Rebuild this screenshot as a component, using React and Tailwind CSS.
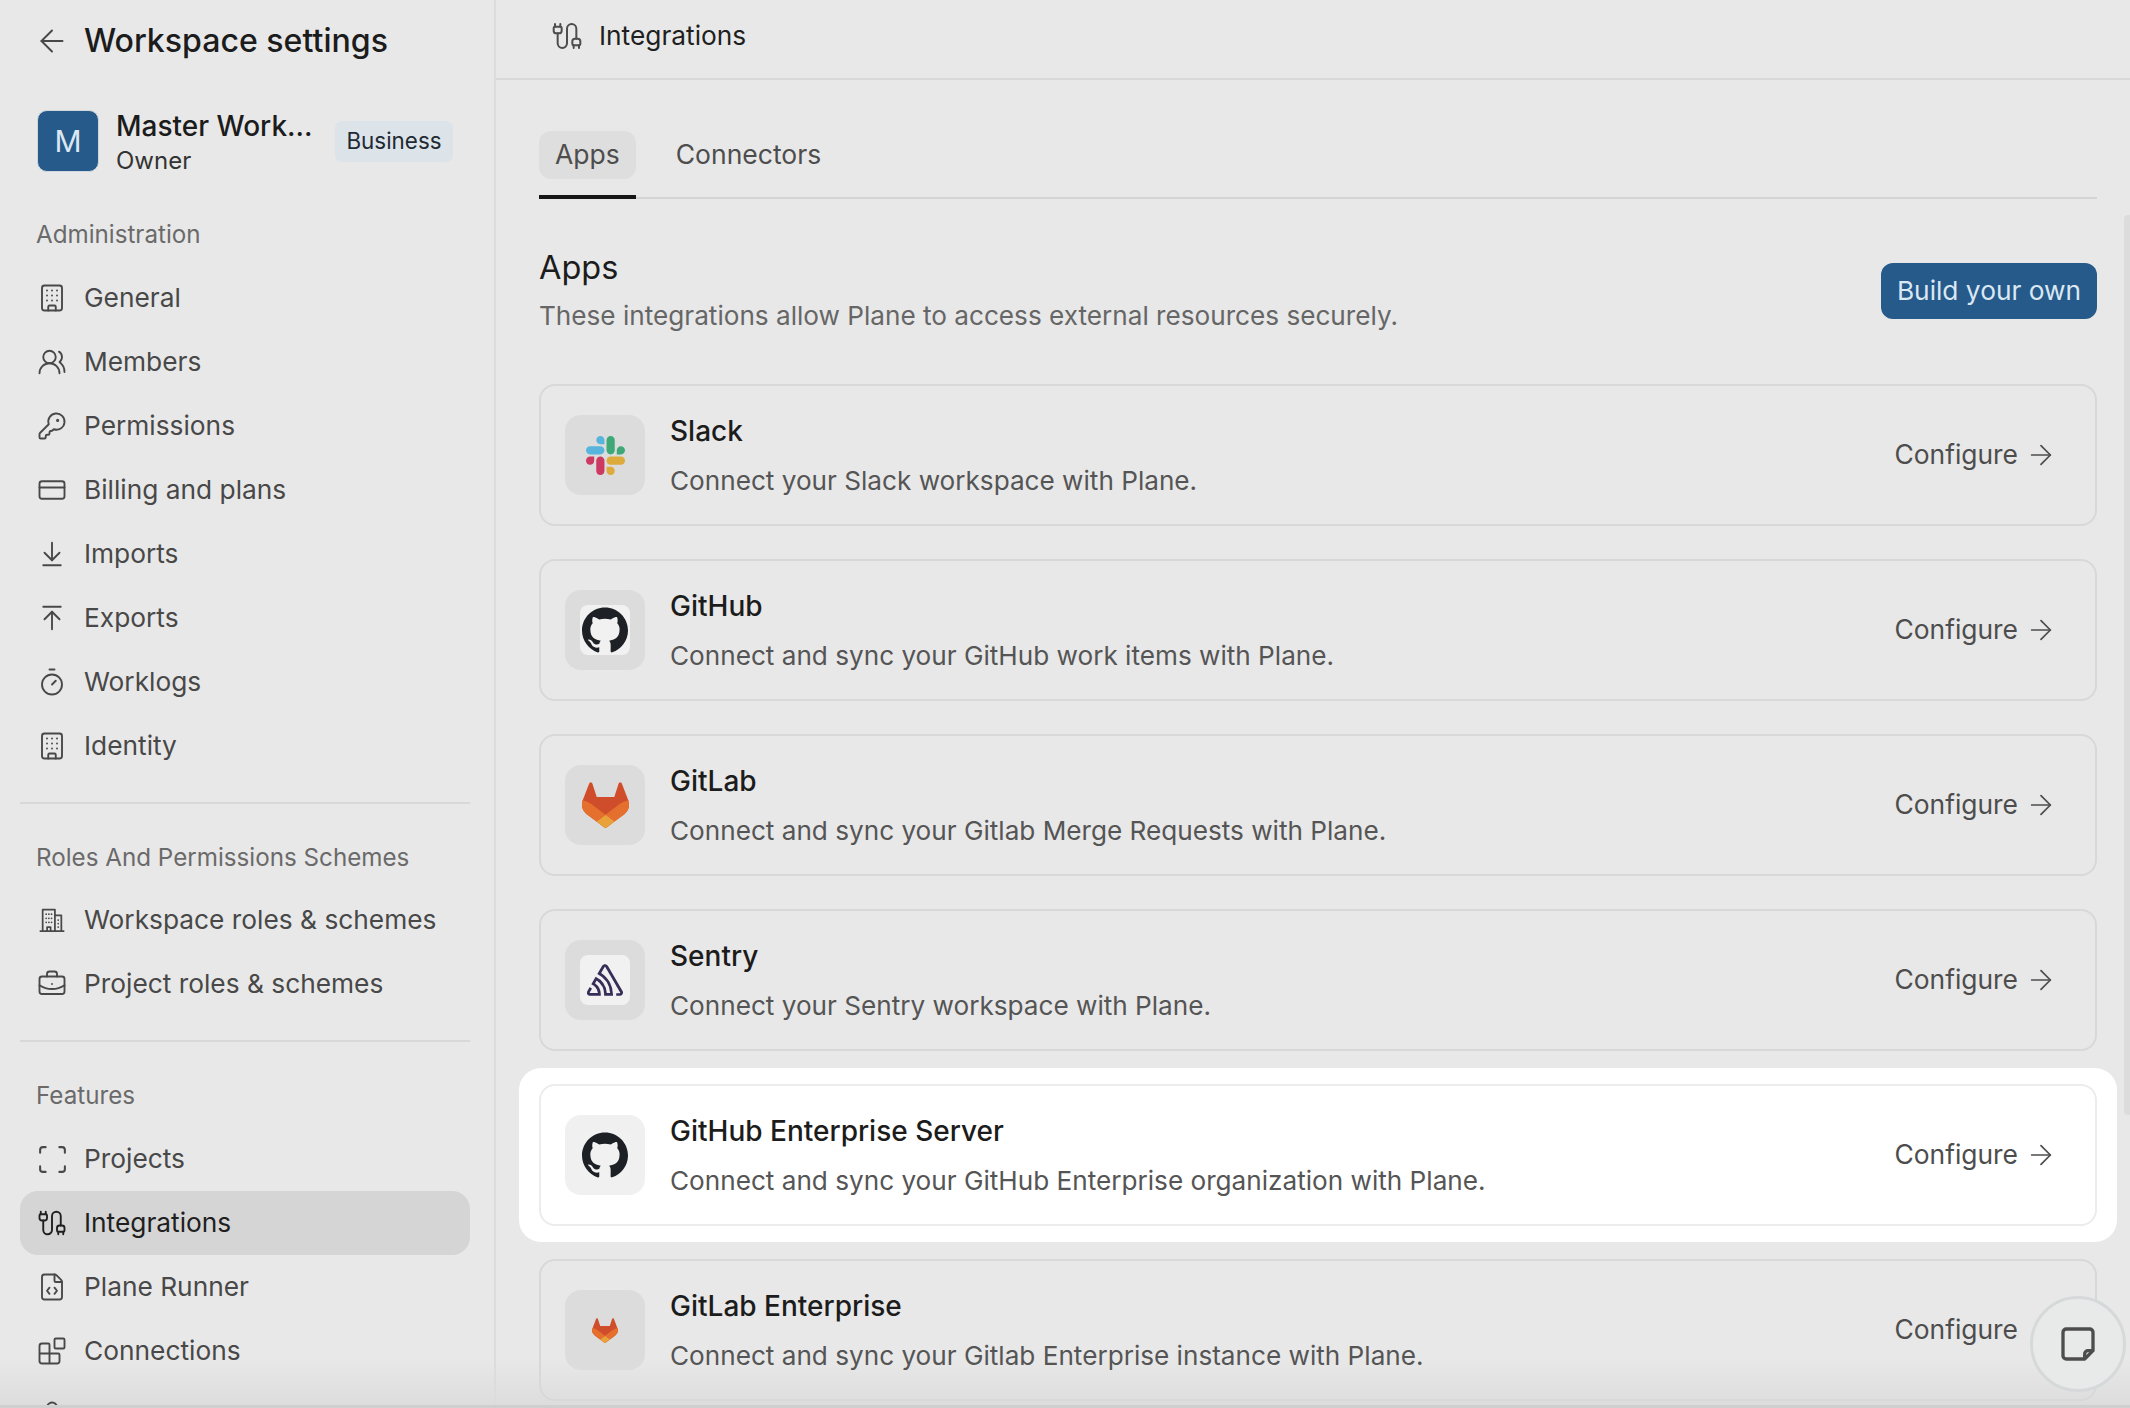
import {
  ArrowLeft, ArrowRight, Building, UsersRound, KeyRound, CreditCard, ArrowDownToLine, ArrowUpToLine,
  Timer, BriefcaseBusiness, Scan, Cable, FileCode, Blocks, Webhook,
} from 'lucide-react';
import { SiGithub, SiSentry } from 'react-icons/si';

function SchemeBuilding({ size, strokeWidth }) {
  return (
    <svg width={size} height={size} viewBox="0 0 24 24" fill="none" stroke="currentColor" strokeWidth={strokeWidth} strokeLinecap="round" strokeLinejoin="round">
      <path d="M2 21.5h20" />
      <path d="M4 21.5V3h10.5v18.5" />
      <path d="M14.5 8H20v13.5" />
      <path d="M7.8 21.5v-3.5h3v3.5" />
      <path d="M7 7h.01M9.3 7h.01M11.6 7h.01M7 10.5h.01M9.3 10.5h.01M11.6 10.5h.01M7 14h.01M9.3 14h.01M11.6 14h.01M17.3 12h.01M17.3 15h.01M17.3 18h.01" />
    </svg>
  );
}

const adminItems = [
  { label: 'General', icon: Building },
  { label: 'Members', icon: UsersRound },
  { label: 'Permissions', icon: KeyRound },
  { label: 'Billing and plans', icon: CreditCard },
  { label: 'Imports', icon: ArrowDownToLine },
  { label: 'Exports', icon: ArrowUpToLine },
  { label: 'Worklogs', icon: Timer },
  { label: 'Identity', icon: Building },
];

const roleItems = [
  { label: 'Workspace roles & schemes', icon: SchemeBuilding, size: 28 },
  { label: 'Project roles & schemes', icon: BriefcaseBusiness },
];

const featureItems = [
  { label: 'Projects', icon: Scan, size: 33 },
  { label: 'Integrations', icon: Cable, active: true },
  { label: 'Plane Runner', icon: FileCode },
  { label: 'Connections', icon: Blocks },
];

function SlackLogo() {
  return (
    <svg viewBox="0 0 122.8 122.8" className="w-[39px] h-[39px]">
      <g fill="#cc3a62">
        <path d="M25.8 77.6c0 7.1-5.8 12.9-12.9 12.9S0 84.7 0 77.6s5.8-12.9 12.9-12.9h12.9v12.9z" />
        <path d="M32.3 77.6c0-7.1 5.8-12.9 12.9-12.9s12.9 5.8 12.9 12.9v32.3c0 7.1-5.8 12.9-12.9 12.9s-12.9-5.8-12.9-12.9V77.6z" />
      </g>
      <g fill="#57b4dc">
        <path d="M45.2 25.8c-7.1 0-12.9-5.8-12.9-12.9S38.1 0 45.2 0s12.9 5.8 12.9 12.9v12.9H45.2z" />
        <path d="M45.2 32.3c7.1 0 12.9 5.8 12.9 12.9s-5.8 12.9-12.9 12.9H12.9C5.8 58.1 0 52.3 0 45.2s5.8-12.9 12.9-12.9h32.3z" />
      </g>
      <g fill="#3fa877">
        <path d="M97 45.2c0-7.1 5.8-12.9 12.9-12.9s12.9 5.8 12.9 12.9-5.8 12.9-12.9 12.9H97V45.2z" />
        <path d="M90.5 45.2c0 7.1-5.8 12.9-12.9 12.9s-12.9-5.8-12.9-12.9V12.9C64.7 5.8 70.5 0 77.6 0s12.9 5.8 12.9 12.9v32.3z" />
      </g>
      <g fill="#dcab3c">
        <path d="M77.6 97c7.1 0 12.9 5.8 12.9 12.9s-5.8 12.9-12.9 12.9-12.9-5.8-12.9-12.9V97h12.9z" />
        <path d="M77.6 90.5c-7.1 0-12.9-5.8-12.9-12.9s5.8-12.9 12.9-12.9h32.3c7.1 0 12.9 5.8 12.9 12.9s-5.8 12.9-12.9 12.9H77.6z" />
      </g>
    </svg>
  );
}

function GitlabLogo({ className }) {
  return (
    <svg viewBox="95 96 190 187" className={className}>
      <path fill="#cf4d2a" d="M282.83,170.73l-.27-.69-26.14-68.22a6.81,6.81,0,0,0-2.69-3.24,7,7,0,0,0-8,.43,7,7,0,0,0-2.32,3.52l-17.65,54H154.29l-17.65-54A6.86,6.86,0,0,0,134.32,99a7,7,0,0,0-8-.43,6.87,6.87,0,0,0-2.69,3.24L97.44,170l-.26.69a48.54,48.54,0,0,0,16.1,56.1l.09.07.24.17,39.82,29.82,19.7,14.91,12,9.06a8.07,8.07,0,0,0,9.76,0l12-9.06,19.7-14.91,40.06-30,.1-.08A48.56,48.56,0,0,0,282.83,170.73Z" />
      <path fill="#e5702e" d="M282.83,170.73l-.27-.69a88.3,88.3,0,0,0-35.15,15.8L190,229.25c19.55,14.79,36.57,27.64,36.57,27.64l40.06-30,.1-.08A48.56,48.56,0,0,0,282.83,170.73Z" />
      <path fill="#e9a13a" d="M153.43,256.89l19.7,14.91,12,9.06a8.07,8.07,0,0,0,9.76,0l12-9.06,19.7-14.91S209.55,244,190,229.25C170.45,244,153.43,256.89,153.43,256.89Z" />
      <path fill="#e5702e" d="M132.58,185.84A88.19,88.19,0,0,0,97.44,170l-.26.69a48.54,48.54,0,0,0,16.1,56.1l.09.07.24.17,39.82,29.82s17-12.85,36.57-27.64Z" />
    </svg>
  );
}

function GithubLogo() {
  return (
    <div className="w-[50px] h-[50px] rounded-lg bg-[#f1f1f1] flex items-center justify-center">
      <SiGithub className="w-[46px] h-[46px] text-[#1d2126]" />
    </div>
  );
}

function SentryLogo() {
  return (
    <div className="w-[50px] h-[50px] rounded-lg bg-[#f1f1f1] flex items-center justify-center">
      <SiSentry className="w-[36px] h-[36px] text-[#362d59]" />
    </div>
  );
}

function NavRow({ item }) {
  const Icon = item.icon;
  return (
    <div
      className={`h-[64px] px-[17px] flex items-center gap-[17px] rounded-[18px] text-[26.3px] ${
        item.active ? 'bg-[#d5d5d5] text-[#1f1f1f]' : 'text-[#484848]'
      }`}
    >
      <div className="w-[30px] shrink-0 flex justify-center">
        <Icon size={item.size || 30} strokeWidth={1.5} className="shrink-0" />
      </div>
      <span>{item.label}</span>
    </div>
  );
}

function NavLabel({ children, className }) {
  return <div className={`h-[40px] pl-[16px] flex items-center text-[24.2px] text-[#6a6a6a] ${className}`}>{children}</div>;
}

function AppCard({ name, description, logo, highlighted, hideArrow }) {
  return (
    <div className={`h-[142px] rounded-[16px] border-2 pl-[24px] pr-[38px] flex items-center ${highlighted ? 'border-[#ececec]' : 'border-[#d8d8d8]'}`}>
      <div className={`w-[80px] h-[80px] rounded-[16px] flex items-center justify-center shrink-0 ${highlighted ? 'bg-[#f0f0f0]' : 'bg-[#dcdcdc]'}`}>
        {logo}
      </div>
      <div className="ml-[25px] mt-[2px] flex-1">
        <div className="h-[40px] flex items-center text-[28px] [font-weight:450] text-[#1c1c1c]">{name}</div>
        <div className="mt-[10px] h-[40px] flex items-center text-[26.15px] text-[#555555]">{description}</div>
      </div>
      <div className="flex items-center gap-[7px] text-[26.4px] text-[#4d4d4d]">
        <span>Configure</span>
        <ArrowRight size={32} strokeWidth={1.3} className={hideArrow ? 'invisible' : ''} />
      </div>
    </div>
  );
}

export default function App() {
  return (
    <div className="relative w-[2130px] h-[1408px] overflow-hidden flex bg-[#e8e8e8] [font-family:Inter,sans-serif]">
      {/* Bottom fade sits behind the panels, which have no background */}
      <div className="absolute inset-x-0 bottom-0 h-[50px] bg-gradient-to-b from-transparent to-[#dcdcdc]" />

      {/* Sidebar */}
      <aside className="relative w-[496px] h-full shrink-0 border-r-2 border-[#dcdcdc] pl-[20px] pr-[24px] overflow-hidden">
        <div className="mt-[15px] h-[52px] px-[17px] flex items-center gap-[17px]">
          <div className="w-[30px] shrink-0 flex justify-center">
            <ArrowLeft size={36} strokeWidth={1.3} className="shrink-0 text-[#484848]" />
          </div>
          <span className="text-[32.1px] font-medium text-[#1c1c1c]">Workspace settings</span>
        </div>

        <div className="mt-[43px] h-[62px] pl-[17px] flex items-center">
          <div className="w-[62px] h-[62px] rounded-[10px] bg-[#255a8a] border border-[#d0d8de] flex items-center justify-center text-[30px] text-[#dbe8f3] shrink-0">
            M
          </div>
          <div className="ml-[17px] mt-[2px] w-[219px]">
            <div className="text-[28px] leading-[38px] font-medium text-[#1c1c1c]">Master Work...</div>
            <div className="text-[24px] leading-[32px] text-[#333333]">Owner</div>
          </div>
          <div className="w-[118px] h-[41px] rounded-[7px] bg-[#dce4ea] flex items-center justify-center text-[22.4px] text-[#1f2a33]">
            Business
          </div>
        </div>

        <NavLabel className="mt-[43px]">Administration</NavLabel>
        <div className="mt-[11px]">
          {adminItems.map((item) => (
            <NavRow key={item.label} item={item} />
          ))}
        </div>

        <div className="mt-[24px] h-[2px] bg-[#d8d8d8]" />

        <NavLabel className="mt-[34px]">Roles And Permissions Schemes</NavLabel>
        <div className="mt-[10px]">
          {roleItems.map((item) => (
            <NavRow key={item.label} item={item} />
          ))}
        </div>

        <div className="mt-[24px] h-[2px] bg-[#d8d8d8]" />

        <NavLabel className="mt-[34px]">Features</NavLabel>
        <div className="mt-[11px]">
          {featureItems.map((item) => (
            <NavRow key={item.label} item={item} />
          ))}
          <div className="h-[64px] px-[17px] flex items-center text-[#484848]">
            <Webhook size={30} strokeWidth={1.5} />
          </div>
        </div>
      </aside>

      {/* Main */}
      <main className="relative flex-1 min-w-0">
        <div className="h-[80px] border-b-2 border-[#d8d8d8] pl-[55px] pb-[6px] flex items-center gap-[16px]">
          <Cable size={32} strokeWidth={1.5} className="text-[#4d4d4d]" />
          <span className="text-[26.3px] text-[#1f1f1f]">Integrations</span>
        </div>

        <div className="pl-[43px] pr-[33px] pt-[51px]">
          <div className="flex gap-[23px] border-b-2 border-[#d4d4d4]">
            <div className="h-[68px] -mb-[2px] border-b-4 border-[#161616]">
              <div className="h-[48px] px-[16px] rounded-[12px] bg-[#dedede] flex items-center text-[26.5px] text-[#4d4d4d]">Apps</div>
            </div>
            <div className="h-[68px] -mb-[2px]">
              <div className="h-[48px] px-[17px] flex items-center text-[26.5px] text-[#4d4d4d]">Connectors</div>
            </div>
          </div>

          <div className="mt-[47px] flex items-center justify-between">
            <div>
              <div className="h-[44px] flex items-center text-[32.5px] text-[#1c1c1c]">Apps</div>
              <div className="mt-[6px] h-[40px] flex items-center text-[26.15px] text-[#666666]">
                These integrations allow Plane to access external resources securely.
              </div>
            </div>
            <button className="w-[216px] h-[56px] rounded-[12px] bg-[#255a8a] text-[26.3px] text-[#dbe8f3]">Build your own</button>
          </div>

          <div className="mt-[48px] flex flex-col gap-[33px]">
            <AppCard name="Slack" description="Connect your Slack workspace with Plane." logo={<SlackLogo />} />
            <AppCard name="GitHub" description="Connect and sync your GitHub work items with Plane." logo={<GithubLogo />} />
            <AppCard
              name="GitLab"
              description="Connect and sync your Gitlab Merge Requests with Plane."
              logo={<GitlabLogo className="w-[47px] h-[46px]" />}
            />
            <AppCard name="Sentry" description="Connect your Sentry workspace with Plane." logo={<SentryLogo />} />
            <div className="-mx-[20px] -my-[16px] px-[20px] py-[16px] bg-white rounded-[22px]">
              <AppCard
                highlighted
                name="GitHub Enterprise Server"
                description="Connect and sync your GitHub Enterprise organization with Plane."
                logo={<GithubLogo />}
              />
            </div>
            <AppCard
              hideArrow
              name="GitLab Enterprise"
              description="Connect and sync your Gitlab Enterprise instance with Plane."
              logo={<GitlabLogo className="w-[26px] h-[25px]" />}
            />
          </div>
        </div>
      </main>

      {/* Scrollbar, bottom edge and floating button sit over the page */}
      <div className="absolute right-0 top-[215px] w-[6px] h-[900px] rounded-l bg-[#dcdcdc]" />
      <div className="absolute inset-x-0 bottom-0 h-[3px] bg-[#cfcfcf]" />
      <div className="absolute left-[2030px] top-[1296px] w-[96px] h-[96px] rounded-full border-[3px] border-[#d5d9d9] bg-[#e8eaea] flex items-center justify-center">
        <svg viewBox="0 0 24 24" fill="none" stroke="#4d4d4d" strokeWidth="2" strokeLinejoin="round" className="w-[40px] h-[40px]">
          <path d="M16 21H5a2 2 0 0 1-2-2V5a2 2 0 0 1 2-2h14a2 2 0 0 1 2 2v11z" />
          <path d="M16 21v-3a2 2 0 0 1 2-2h3" />
        </svg>
      </div>
    </div>
  );
}
